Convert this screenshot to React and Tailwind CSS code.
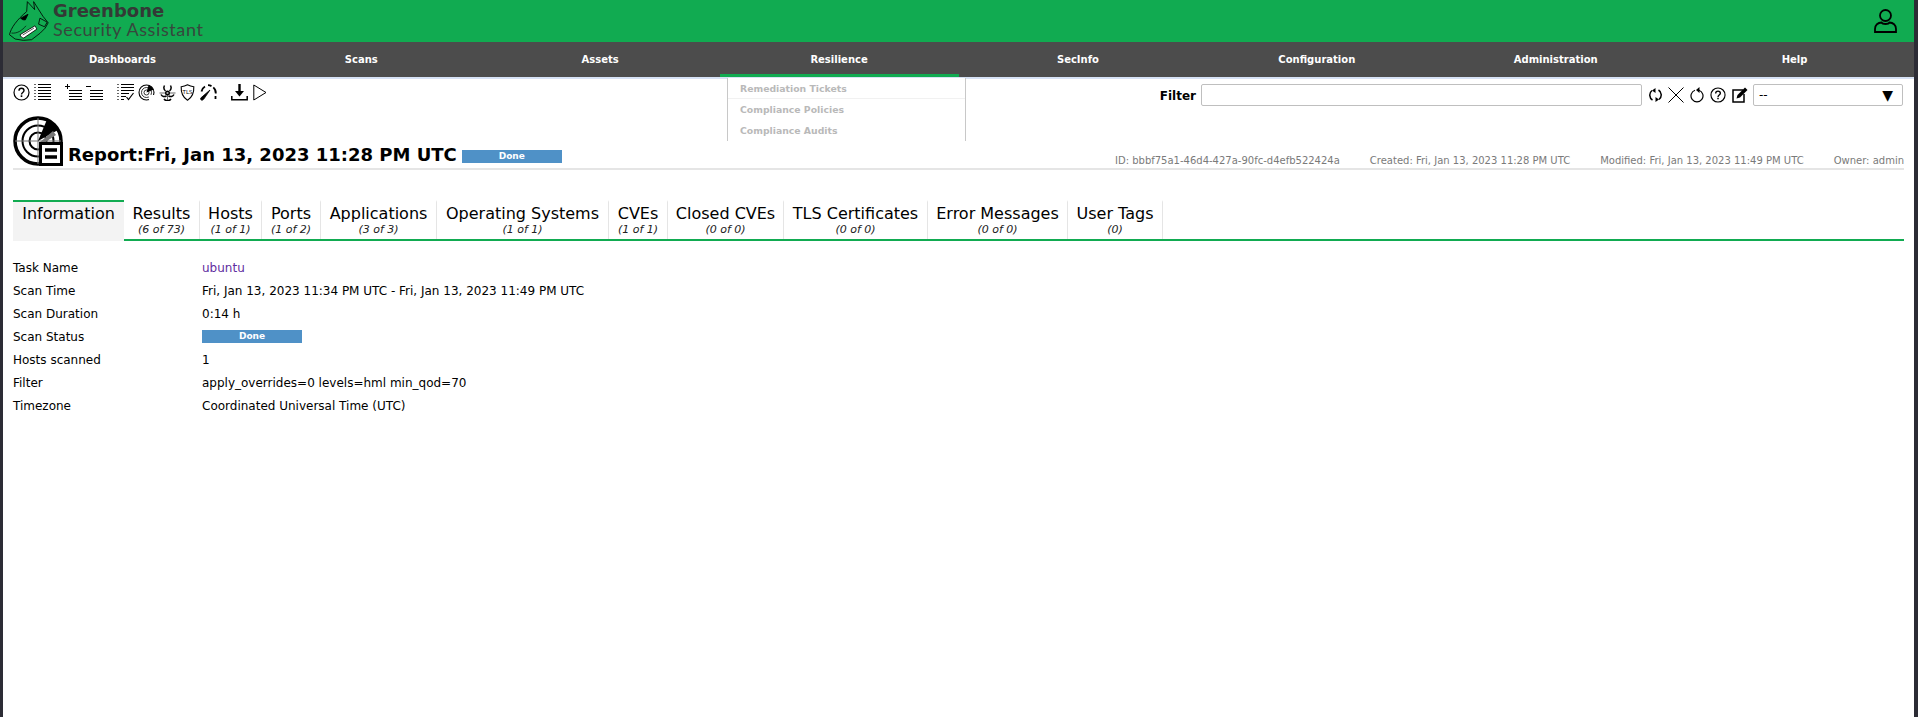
import React from "react";

const menu = ["Dashboards", "Scans", "Assets", "Resilience", "SecInfo", "Configuration", "Administration", "Help"];

const tabs = [
  { name: "Information", active: true, w: "w-[111px]" },
  { name: "Results", sub: "6 of 73", w: "w-[76px]" },
  { name: "Hosts", sub: "1 of 1", w: "w-[62px]" },
  { name: "Ports", sub: "1 of 2", w: "w-[59px]" },
  { name: "Applications", sub: "3 of 3", w: "w-[116px]" },
  { name: "Operating Systems", sub: "1 of 1", w: "w-[172px]" },
  { name: "CVEs", sub: "1 of 1", w: "w-[59px]" },
  { name: "Closed CVEs", sub: "0 of 0", w: "w-[116px]" },
  { name: "TLS Certificates", sub: "0 of 0", w: "w-[144px]" },
  { name: "Error Messages", sub: "0 of 0", w: "w-[140px]" },
  { name: "User Tags", sub: "0", w: "w-[95px]" },
];

function StatusBar() {
  return (
    <div className="w-[100px] h-[13px] bg-[#4f91c7] text-white text-[9px] font-bold leading-[13px] text-center">
      Done
    </div>
  );
}

const infoRows = [
  ["Task Name", <span className="text-[#5f2da0]">ubuntu</span>],
  ["Scan Time", "Fri, Jan 13, 2023 11:34 PM UTC - Fri, Jan 13, 2023 11:49 PM UTC"],
  ["Scan Duration", "0:14 h"],
  ["Scan Status", <StatusBar />],
  ["Hosts scanned", "1"],
  ["Filter", "apply_overrides=0 levels=hml min_qod=70"],
  ["Timezone", "Coordinated Universal Time (UTC)"],
];

// toolbar icons, drawn on a 17x17 box
const Icon = ({ children, className = "w-[17px] h-[17px] mr-[4px]", box = "0 0 17 17" }) => (
  <svg viewBox={box} fill="none" stroke="black" strokeWidth="1" className={`shrink-0 ${className}`}>
    {children}
  </svg>
);

const HelpIcon = ({ className }) => (
  <Icon className={className}>
    <circle cx="8.5" cy="8.5" r="7.5" strokeWidth="1.2" />
    <path d="M6 6.800c0-1.500 1.100-2.500 2.500-2.500S11 5.300 11 6.600c0 1.900-2.500 2-2.500 3.900" strokeWidth="1.400" />
    <path d="M8.500 11.300v1.700" strokeWidth="1.600" />
  </Icon>
);

const Lines = ({ x, w, ys }) => ys.map((y) => <path key={y} d={`M${x} ${y}h${w}`} />);

const ListIcon = () => (
  <Icon>
    <Lines x={4} w={13} ys={[0.5, 3.5, 6.5, 9.5, 12.5, 15.5]} />
    <path d="M1 0v16" strokeDasharray="1 2" strokeWidth="1.2" />
  </Icon>
);

const PlusListIcon = () => (
  <Icon>
    <Lines x={4} w={13} ys={[6.5, 9.5, 12.5, 15.5]} />
    <path d="M0 2.500h5M2.500 0v5" />
  </Icon>
);

const MinusListIcon = () => (
  <Icon>
    <Lines x={4} w={13} ys={[6.5, 9.5, 12.5, 15.5]} />
    <path d="M0 2.500h5" />
  </Icon>
);

const CheckListIcon = () => (
  <Icon>
    <Lines x={4} w={13} ys={[0.5, 3.5, 6.5]} />
    <path d="M4 9.500h8M4 12.500h5M4 15.500h3" />
    <path d="M1 0v16" strokeDasharray="1 2" strokeWidth="1.200" />
    <path d="M9.500 13l2 2.500L16.500 9" strokeWidth="1.200" />
  </Icon>
);

const RadarIcon = () => (
  <Icon>
    <circle cx="8.500" cy="8.500" r="7.500" strokeWidth="1.100" />
    <circle cx="8.500" cy="8.500" r="5" strokeWidth=".8" />
    <circle cx="8.500" cy="8.500" r="2.500" strokeWidth=".8" />
    <path d="M8.500 8.500L10.500 1.300A7.500 7.500 0 0 1 15.500 5.800Z" fill="black" stroke="none" />
    <path d="M11 11h5v5h-5z" fill="white" stroke="none" />
  </Icon>
);

const BioIcon = () => (
  <Icon>
    <circle cx="8.500" cy="9" r="1.800" strokeWidth="1.400" />
    <path d="M5.500 1.500a4.500 4.500 0 0 0 1 5.500M11.500 1.500a4.500 4.500 0 0 1-1 5.500M2 10.500a4 4 0 0 0 5.500 1.500M15 10.500a4 4 0 0 1-5.500 1.500M5 15a4.500 4.500 0 0 0 7 0" strokeWidth="1.500" />
    <path d="M.5 9h16M8.500 11v6" strokeWidth=".6" />
  </Icon>
);

const TlsIcon = () => (
  <Icon box="0 0 15 17" className="w-[15px] h-[17px] mr-[5px]">
    <path d="M7.500.8c2 1.100 4 1.700 6.300 1.900.3 5.500-1.500 10.500-6.300 13.500C2.700 13.200.9 8.200 1.200 2.700 3.500 2.500 5.500 1.900 7.500.8z" strokeWidth="1.100" />
    <text x="7.500" y="9.500" textAnchor="middle" fontSize="5.500" stroke="none" fill="black" fontFamily="'DejaVu Sans', sans-serif">
      TLS
    </text>
  </Icon>
);

const GaugeIcon = () => (
  <Icon>
    <path d="M1.500 7.500A7.500 7.500 0 0 1 5 2.600M8 1.200a7.500 7.500 0 0 1 3.500.9M13.300 3.400a7.500 7.500 0 0 1 2.500 6.100M15.500 12v3" strokeWidth="1.800" />
    <path d="M1 15.800c-.8-.8-.5-1.400.2-2.200L10 6 4 14.800c-.9 1.200-2 1.900-3 1z" fill="black" stroke="black" strokeWidth=".8" />
  </Icon>
);

const DownloadIcon = () => (
  <Icon>
    <path d="M8.500 0v10" strokeWidth="2.400" />
    <path d="M4 7l4.500 5.500L13 7z" fill="black" stroke="none" />
    <path d="M.8 12v3.800h15.400V12" strokeWidth="1.500" />
  </Icon>
);

const PlayIcon = () => (
  <Icon className="w-[14px] h-[17px]" box="0 0 14 17">
    <path d="M.8 1L13 8.500.8 16z" />
  </Icon>
);

const RefreshIcon = () => (
  <Icon className="w-[13px] h-[16px] mt-[3px]" box="0 0 13 16">
    <path d="M3 3.500A5.800 5.800 0 0 0 3.500 13M10 12.500A5.800 5.800 0 0 0 9.500 3" strokeWidth="1.500" />
    <path d="M6.500 1v5L3 3.500zM6.500 15v-5l3.500 2.500z" fill="black" stroke="none" />
  </Icon>
);

const CloseIcon = () => (
  <Icon className="w-[16px] h-[16px] mt-[3px]" box="0 0 16 16">
    <path d="M.5.5l15 15M15.500.5l-15 15" />
  </Icon>
);

const ResetIcon = () => (
  <Icon className="w-[14px] h-[16px] mt-[3px]" box="0 0 14 16">
    <path d="M5 3.200a6 6 0 1 0 4 0" strokeWidth="1.200" />
    <path d="M9.500 0v6L6 3z" fill="black" stroke="none" />
  </Icon>
);

const EditIcon = () => (
  <Icon className="w-[17px] h-[16px] mt-[3px]" box="0 0 17 16">
    <path d="M11 3H1v12h11V7" strokeWidth="1.500" />
    <path d="M4.500 11.500l1-3.500L13 .5 15.500 3 8 10.500z" fill="black" stroke="none" />
  </Icon>
);

const ReportIcon = () => (
  <svg viewBox="0 0 50 50" fill="none" stroke="black" className="w-[50px] h-[50px] shrink-0 mb-[2px]">
    <circle cx="25" cy="25" r="23" strokeWidth="3.500" />
    <circle cx="25" cy="25" r="15.500" strokeWidth="2" />
    <circle cx="25" cy="25" r="8.500" strokeWidth="2" />
    <path d="M25 2v46M2 25h46" strokeWidth="1" stroke="#777" />
    <path d="M25 25L34 3.500A23 23 0 0 1 45 14z" fill="black" stroke="none" />
    <path d="M26 27L40 15l3 4-15 10z" fill="#777" stroke="none" />
    <rect x="27.500" y="27.500" width="21" height="21" fill="white" strokeWidth="3" />
    <path d="M32 34h12M32 41h12" strokeWidth="3.500" />
  </svg>
);

const UserIcon = () => (
  <svg viewBox="0 0 23 24" fill="none" stroke="black" strokeWidth="1.800" className="w-[23px] h-[24px] mt-[9px]">
    <circle cx="11.500" cy="6.500" r="5.500" />
    <path d="M1 23v-3c0-4 3-6.500 6.500-6.500 1 2 7 2 8 0 3.500 0 6.500 2.500 6.500 6.500v3z" />
  </svg>
);

const LogoIcon = () => (
  <svg viewBox="27 0 120 124" fill="none" stroke="black" strokeWidth="2.500" className="w-[40px] h-[41px] shrink-0">
    <path d="M28 105C32 85 50 60 80 35L82 5l22 24 -3-24 28 44 16 20 -9 16-15 15-26 20-25 2-25-4z" fill="#11ab51" />
    <path d="M62 55l22-12-8 17c-6 1-11-1-14-5z" fill="black" />
    <path d="M60 105l45-27 6 10-40 27c-5-1-10-4-11-10z" fill="white" />
    <path d="M68 106l34-21" strokeWidth="2" />
    <path d="M34 100c18 2 32-8 44-22" strokeWidth="2" />
    <path d="M120 55l22 12-8 14-18-8z" fill="#11ab51" />
  </svg>
);

function Tab({ tab }) {
  return (
    <div
      className={`${tab.w} flex flex-col items-center pt-[2px] border-t-2 whitespace-nowrap ${
        tab.active
          ? "h-[41px] bg-[#f3f3f3] border-t-[#11ab51]"
          : "h-[39px] border-t-transparent border-r border-r-[#e5e5e5]"
      }`}
    >
      <span className="text-[16px] leading-[19px]">{tab.name}</span>
      {tab.sub && <span className="text-[11px] leading-[14px] italic text-[#222]">({tab.sub})</span>}
    </div>
  );
}

export default function App() {
  return (
    <div className="relative h-[717px] overflow-hidden bg-white border-l-[3px] border-r-[4px] border-[#2c2c35] text-[12px] text-black font-['DejaVu_Sans',sans-serif]">
      {/* top bar */}
      <header className="h-[42px] bg-[#11ab51] flex items-start justify-between pl-[6px] pr-[17px]">
        <div className="flex items-start gap-[4px]">
          <LogoIcon />
          <div className="flex flex-col mt-[1px] whitespace-nowrap">
            <span className="text-[18px] leading-[19px] font-bold text-[#333a36]">Greenbone</span>
            <span className="font-['Lato',sans-serif] text-[18px] leading-[18px] tracking-[.6px] text-[#37473d]">
              Security Assistant
            </span>
          </div>
        </div>
        <UserIcon />
      </header>

      {/* main menu */}
      <nav className="h-[35px] bg-[#4c4c4c] flex">
        {menu.map((item) => (
          <div
            key={item}
            className={`flex-1 flex items-center justify-center text-white text-[10px] font-bold ${
              item === "Resilience" ? "border-b-[3px] border-[#11ab51] pt-[3px]" : ""
            }`}
          >
            {item}
          </div>
        ))}
      </nav>
      <div className="h-[2px] bg-[#d6e2f5]" />

      {/* open menu, cut off by the page content */}
      <div className="absolute left-[724px] top-[78px] w-[239px] h-[63px] bg-white border-x border-[#c8c8c8] text-[9.300px] font-bold text-[#b9b9b9]">
        <div className="h-[21px] pl-[12px] pt-[1px] flex items-center border-b border-[#f1f1f1]">Remediation Tickets</div>
        <div className="h-[21px] pl-[12px] flex items-center">Compliance Policies</div>
        <div className="h-[21px] pl-[12px] flex items-center">Compliance Audits</div>
      </div>

      {/* toolbar */}
      <div className="h-[22px] mt-[5px] flex items-start justify-between pl-[10px] pr-[11px]">
        <div className="flex items-start">
          <HelpIcon />
          <ListIcon />
          <div className="w-[10px]" />
          <PlusListIcon />
          <MinusListIcon />
          <div className="w-[10px]" />
          <CheckListIcon />
          <RadarIcon />
          <BioIcon />
          <TlsIcon />
          <GaugeIcon />
          <div className="w-[10px]" />
          <DownloadIcon />
          <div className="w-[1px]" />
          <PlayIcon />
        </div>
        <div className="flex items-start">
          <span className="font-bold mr-[5px] mt-[1px] leading-[22px]">Filter</span>
          <div className="w-[441px] h-[22px] bg-white border border-[#bfbfbf] rounded-[2px]" />
          <div className="flex items-start gap-[6px] ml-[7px] mr-[4px]">
            <RefreshIcon />
            <CloseIcon />
            <ResetIcon />
            <HelpIcon className="w-[16px] h-[16px] mt-[3px]" />
            <EditIcon />
          </div>
          <div className="w-[150px] h-[22px] bg-white border border-[#bfbfbf] rounded-[2px] flex items-center justify-between pl-[5px] pr-[9px]">
            <span>--</span>
            <span className="text-[14px]">▼</span>
          </div>
        </div>
      </div>

      {/* report title */}
      <div className="mt-[10px] ml-[10px] mr-[10px] flex items-end border-b-2 border-[#e5e5e5] h-[54px]">
        <ReportIcon />
        <h1 className="ml-[5px] text-[18px] leading-[20px] font-bold whitespace-nowrap mb-[3px]">
          Report:Fri, Jan 13, 2023 11:28 PM UTC
        </h1>
        <div className="ml-[5px] mb-[5px]">
          <StatusBar />
        </div>
        <div className="ml-auto flex gap-[30px] text-[10px] text-[#7a7a7a] leading-[12px] mb-[1px] whitespace-nowrap">
          <span>ID: bbbf75a1-46d4-427a-90fc-d4efb522424a</span>
          <span>Created: Fri, Jan 13, 2023 11:28 PM UTC</span>
          <span>Modified: Fri, Jan 13, 2023 11:49 PM UTC</span>
          <span>Owner: admin</span>
        </div>
      </div>

      {/* tabs */}
      <div className="mt-[30px] ml-[10px] mr-[10px] h-[41px] flex items-start border-b-2 border-[#11ab51]">
        {tabs.map((tab) => (
          <Tab key={tab.name} tab={tab} />
        ))}
      </div>

      {/* report info */}
      <div className="mt-[15px] ml-[10px]">
        {infoRows.map(([label, value]) => (
          <div key={label} className="h-[23px] flex items-center">
            <div className="w-[189px]">{label}</div>
            <div>{value}</div>
          </div>
        ))}
      </div>
    </div>
  );
}
